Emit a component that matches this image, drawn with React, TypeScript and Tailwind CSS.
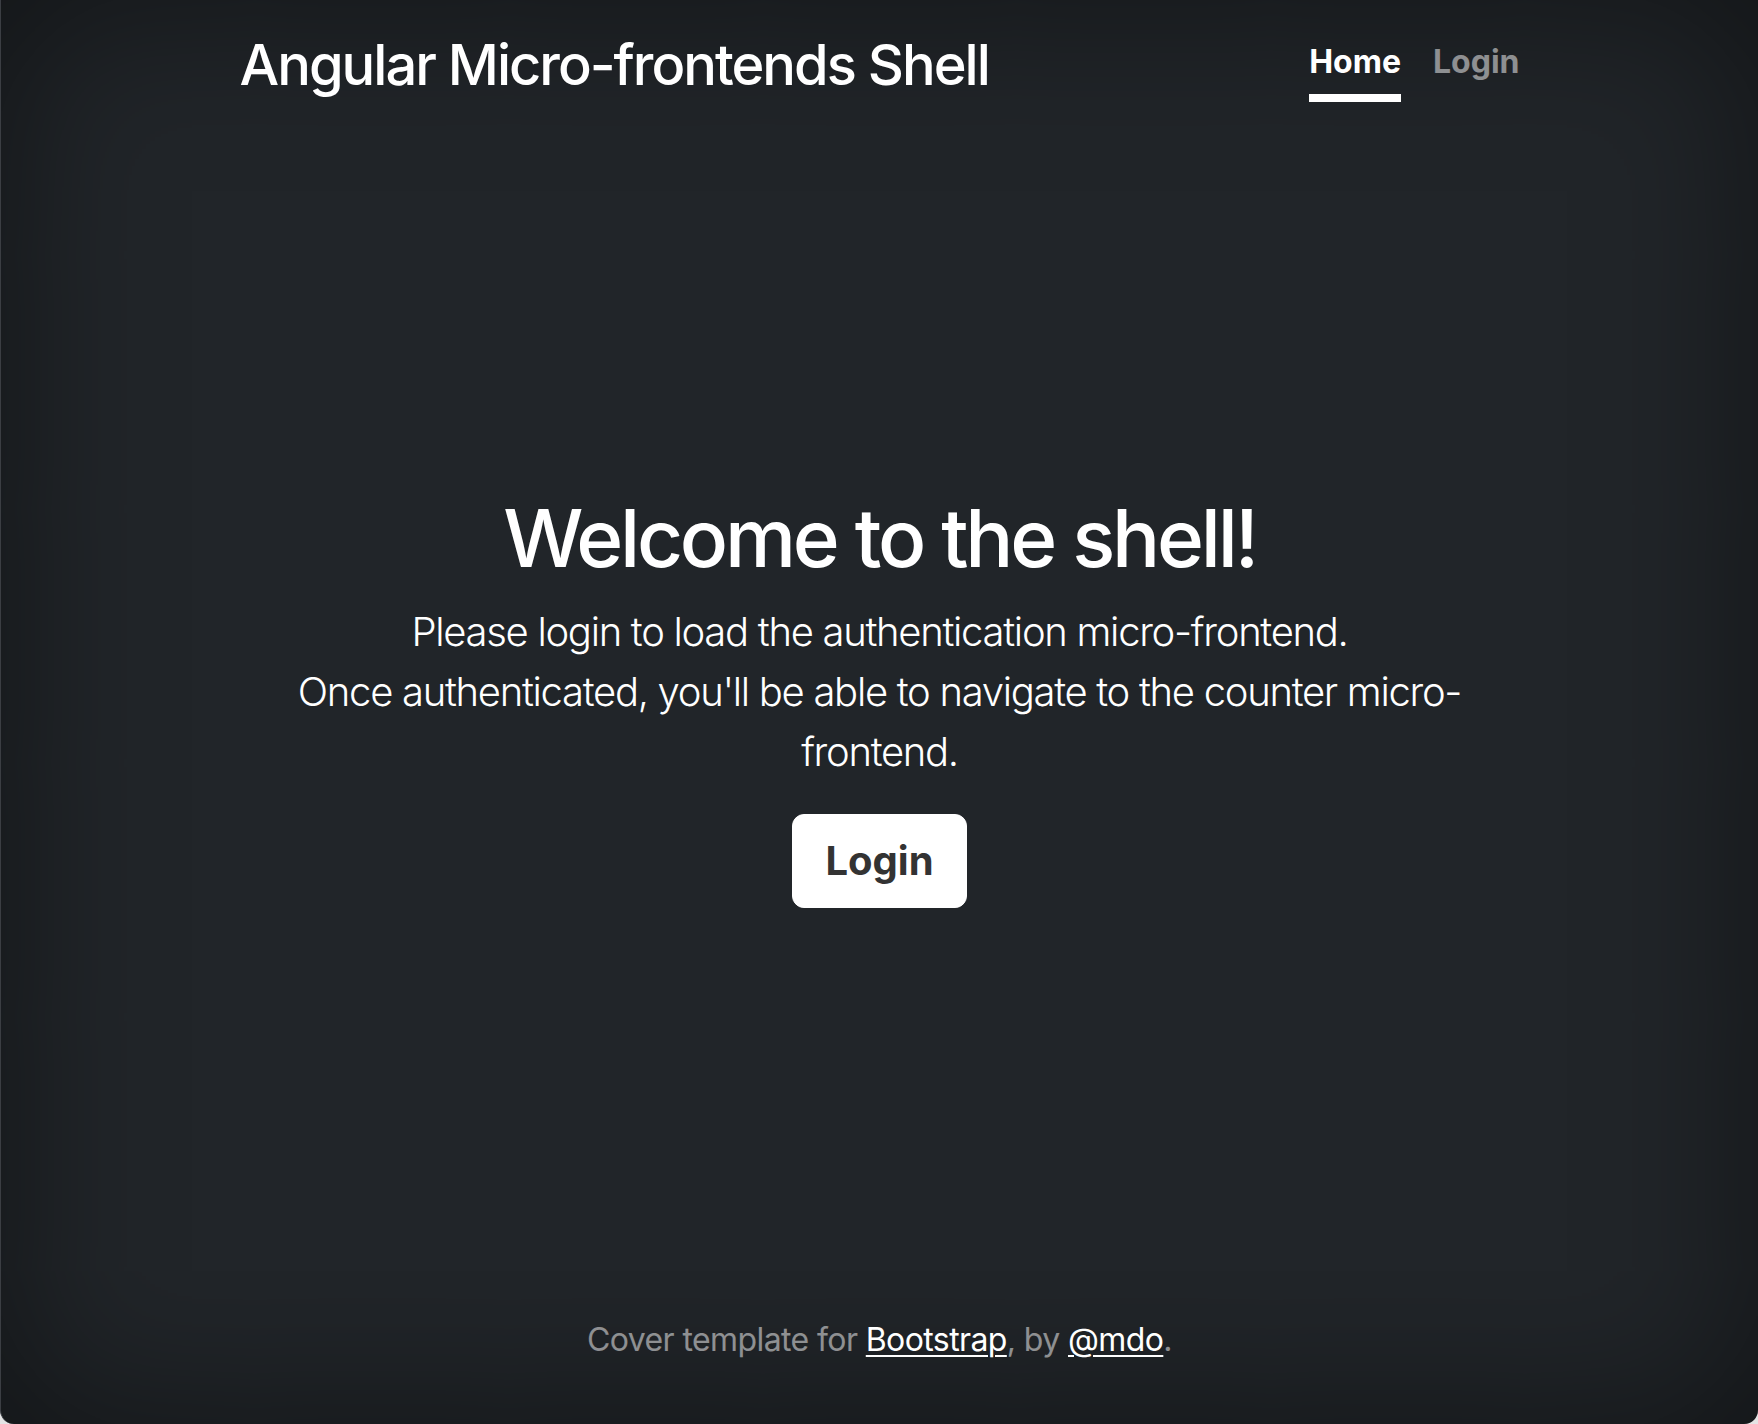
import React from 'react';

export default function App() {
  return (
    <div className="w-full h-[1424px] bg-[#e4e4e4]">
      <div
        className="h-full rounded-b-[14px] border-l border-[#3b3e43] bg-[#212529] shadow-[inset_0_0_160px_rgba(0,0,0,0.5)] text-white overflow-hidden"
        style={{ fontFamily: 'Inter, "Liberation Sans", sans-serif' }}
      >
        <div className="flex flex-col h-full max-w-[1344px] mx-auto px-8 pt-8 pb-8">
          {/* Header */}
          <header className="flex items-start justify-between">
            <h3 className="text-[56px] leading-[1.2] font-medium tracking-[-2px]">
              Angular Micro-frontends Shell
            </h3>
            <nav className="flex gap-8 -mt-[2px]">
              <a className="pt-2 pb-2 border-b-[8px] border-white text-[32px] leading-[48px] font-bold text-white cursor-pointer">
                Home
              </a>
              <a className="pt-2 pb-2 border-b-[8px] border-transparent text-[32px] leading-[48px] font-bold text-white/50 cursor-pointer">
                Login
              </a>
            </nav>
          </header>

          {/* Main */}
          <main className="my-auto pt-3 px-8 text-center">
            <h1 className="text-[80px] leading-[1.2] font-medium tracking-[-3.2px] mb-4">
              Welcome to the shell!
            </h1>
            <p className="text-[40px] leading-[60px] font-light tracking-[-1.3px] mb-8">
              Please login to load the authentication micro-frontend.
              <br />
              Once authenticated, you'll be able to navigate to the counter micro-frontend.
            </p>
            <p className="mb-8">
              <button className="inline-block bg-white text-[#333] text-[40px] leading-[60px] font-bold px-8 py-4 rounded-[12px] border border-white">
                Login
              </button>
            </p>
          </main>

          {/* Footer */}
          <footer className="text-center text-[32px] leading-[48px] tracking-[-0.6px] text-white/50 mb-7">
            Cover template for{' '}
            <a className="text-white underline underline-offset-4 decoration-2 cursor-pointer">Bootstrap</a>
            , by{' '}
            <a className="text-white underline underline-offset-4 decoration-2 cursor-pointer">@mdo</a>.
          </footer>
        </div>
      </div>
    </div>
  );
}
